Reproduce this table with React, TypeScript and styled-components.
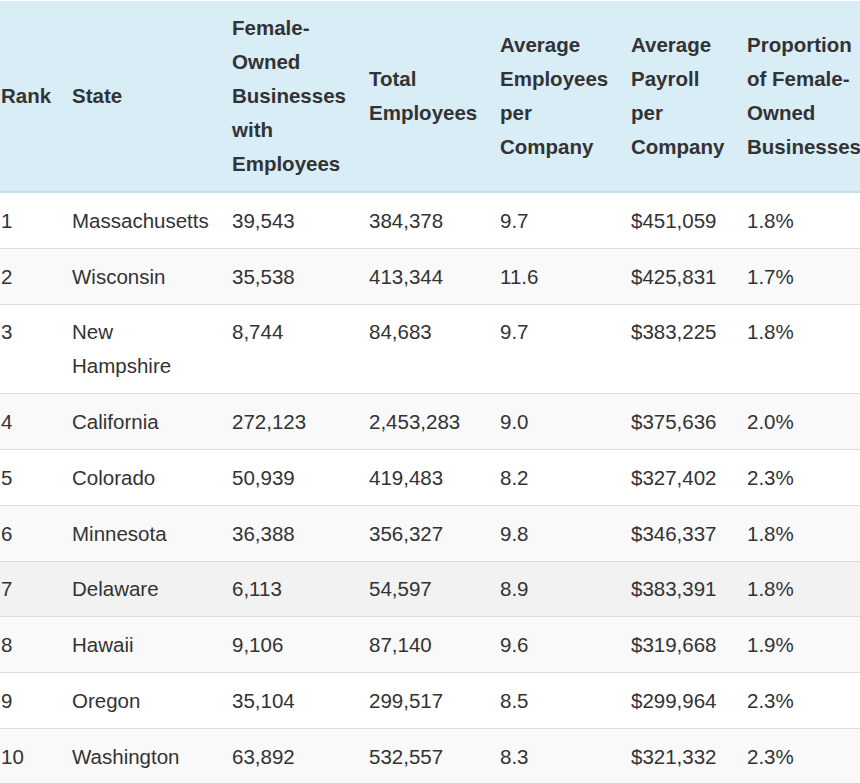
import React from "react"
import styled, { createGlobalStyle } from "styled-components"

const GlobalStyle = createGlobalStyle`
  html, body {
    margin: 0;
    padding: 0;
    background: #ffffff;
    overflow: hidden;
  }
`

const Wrap = styled.div`
  width: 860px;
  overflow: hidden;
  padding-top: 1px;
  font-family: "Liberation Sans", Arial, sans-serif;
  color: #333333;
`

const Table = styled.table`
  border-collapse: collapse;
  table-layout: fixed;
  width: 870px;
  font-size: 20.5px;
  line-height: 34px;
`

const HeadRow = styled.tr`
  background-color: #d9edf7;
  border-bottom: 2px solid #c8dfeb;
`

const Th = styled.th`
  text-align: left;
  font-weight: bold;
  vertical-align: middle;
  padding: 10px 10px;

  &:first-child {
    padding-left: 1px;
  }
`

const Row = styled.tr<{ $shade: string }>`
  background-color: ${p => p.$shade};
  border-top: 1px solid #dddddd;
`

const Td = styled.td`
  vertical-align: top;
  padding: 10.75px 10px 10px;

  &:first-child {
    padding-left: 1px;
  }
`

const columns = [62, 160, 137, 131, 131, 116, 133]

const headers = [
  "Rank",
  "State",
  "Female-Owned Businesses with Employees",
  "Total Employees",
  "Average Employees per Company",
  "Average Payroll per Company",
  "Proportion of Female-Owned Businesses",
]

const rows = [
  ["1", "Massachusetts", "39,543", "384,378", "9.7", "$451,059", "1.8%"],
  ["2", "Wisconsin", "35,538", "413,344", "11.6", "$425,831", "1.7%"],
  ["3", "New Hampshire", "8,744", "84,683", "9.7", "$383,225", "1.8%"],
  ["4", "California", "272,123", "2,453,283", "9.0", "$375,636", "2.0%"],
  ["5", "Colorado", "50,939", "419,483", "8.2", "$327,402", "2.3%"],
  ["6", "Minnesota", "36,388", "356,327", "9.8", "$346,337", "1.8%"],
  ["7", "Delaware", "6,113", "54,597", "8.9", "$383,391", "1.8%"],
  ["8", "Hawaii", "9,106", "87,140", "9.6", "$319,668", "1.9%"],
  ["9", "Oregon", "35,104", "299,517", "8.5", "$299,964", "2.3%"],
  ["10", "Washington", "63,892", "532,557", "8.3", "$321,332", "2.3%"],
]

// row 7 is shown in its hover shade
const shadeFor = (i: number) => {
  if (i === 6) return "#f2f2f2"
  return i % 2 === 1 || i === 7 ? "#f9f9f9" : "#ffffff"
}

export default function App() {
  return (
    <>
      <GlobalStyle />
      <Wrap>
        <Table>
          <colgroup>
            {columns.map((w, i) => (
              <col key={i} style={{ width: w }} />
            ))}
          </colgroup>
          <thead>
            <HeadRow>
              {headers.map(h => (
                <Th key={h}>{h}</Th>
              ))}
            </HeadRow>
          </thead>
          <tbody>
            {rows.map((r, i) => (
              <Row key={r[0]} $shade={shadeFor(i)}>
                {r.map((c, j) => (
                  <Td key={j}>{c}</Td>
                ))}
              </Row>
            ))}
          </tbody>
        </Table>
      </Wrap>
    </>
  )
}
